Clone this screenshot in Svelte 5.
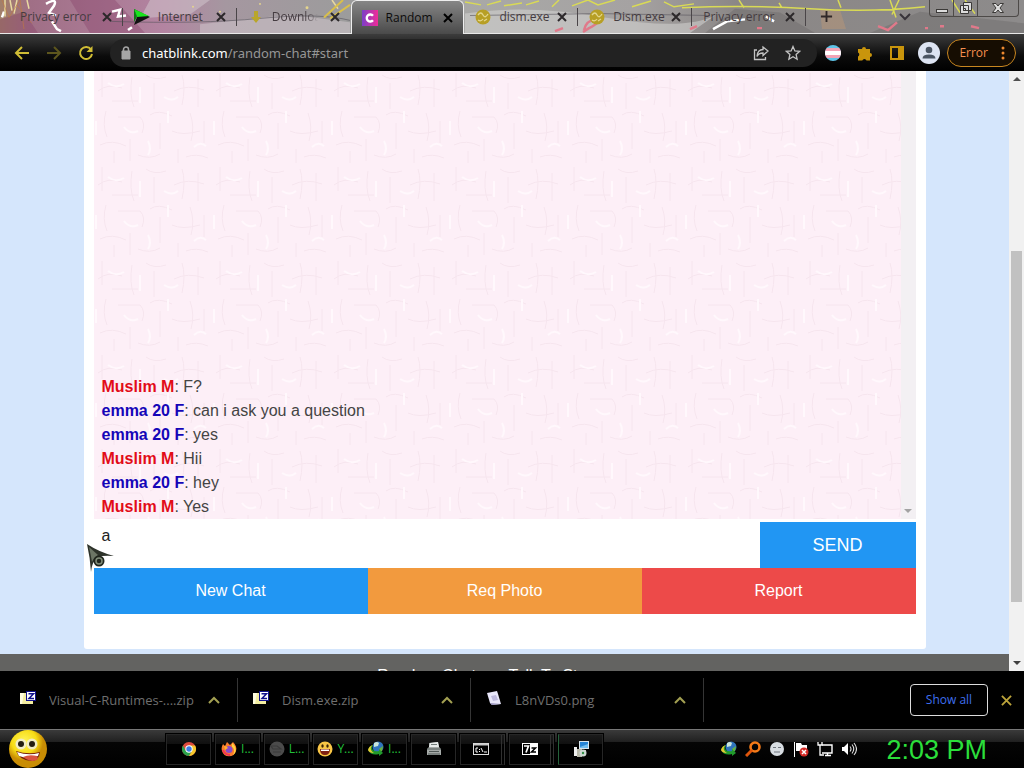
<script>
  const tabs = [
    { title: 'Privacy error', icon: null },
    { title: 'Internet', icon: 'idm' },
    { title: 'Downloads', icon: 'down' },
    { title: 'Random', icon: 'chat', active: true },
    { title: 'dism.exe', icon: 'gold' },
    { title: 'Dism.exe', icon: 'gold' },
    { title: 'Privacy error', icon: null }
  ];
  const messages = [
    { who: 'Muslim M', me: true, text: 'F?' },
    { who: 'emma 20 F', me: false, text: 'can i ask you a question' },
    { who: 'emma 20 F', me: false, text: 'yes' },
    { who: 'Muslim M', me: true, text: 'Hii' },
    { who: 'emma 20 F', me: false, text: 'hey' },
    { who: 'Muslim M', me: true, text: 'Yes' }
  ];
  const downloads = [
    { name: 'Visual-C-Runtimes-....zip', kind: 'zip' },
    { name: 'Dism.exe.zip', kind: 'zip' },
    { name: 'L8nVDs0.png', kind: 'png' }
  ];
  const tasks = [
    { icon: 'chrome', label: '' },
    { icon: 'firefox', label: 'I...' },
    { icon: 'globe', label: 'L...' },
    { icon: 'smile', label: 'Y...' },
    { icon: 'idmball', label: 'I...' },
    { icon: 'printer', label: '' },
    { icon: 'cmd', label: '', stacked: true },
    { icon: 'seven', label: '', stacked: true },
    { icon: 'installer', label: '', lit: true }
  ];
  const tray = ['idmball', 'search', 'face', 'flag', 'network', 'volume'];
  let draft = $state('a');
</script>

{#snippet icon(name)}
  <svg class="icon" viewBox="0 0 16 16" aria-hidden="true">
    {#if name === 'idm'}
      <path d="M0 0 16 8 0 16 3 8Z" fill="#111" /><path d="M0 0 15 7 3 8Z" fill="#19e51d" /><path d="M0 0 3 8 0 13Z" fill="#0c7c12" />
    {:else if name === 'down'}
      <path d="M6 2h4v6h3l-5 6-5-6h3Z" fill="#b9a62a" />
    {:else if name === 'chat'}
      <defs><linearGradient id="chatg" x2="1"><stop stop-color="#7b3fc8" /><stop offset="1" stop-color="#f02b98" /></linearGradient></defs>
      <rect width="16" height="16" fill="url(#chatg)" />
      <path d="M11 5.8A3.500 3.500 0 1 0 11 10.200" fill="none" stroke="#fff" stroke-width="2.400" />
    {:else if name === 'gold'}
      <circle cx="8" cy="8" r="7.5" fill="#b79f25" /><path d="M3 6q3-4 5 0t5-1M3 11q3 2 5-1M9 12l3-2" fill="none" stroke="#e2d68c" stroke-width="1.300" />
    {:else if name === 'zip'}
      <path d="M0 3h6l1 2h6v9H0Z" fill="#f3eda0" /><path d="M0 3h4l-2 11H0Z" fill="#fffde0" />
      <rect x="6.5" y="1.5" width="9" height="9" fill="#fff" stroke="#10108c" /><path d="M8.5 3.8h5L9 8.4h5" fill="none" stroke="#10108c" stroke-width="1.5" />
    {:else if name === 'png'}
      <path d="m1 3 10-2 1 3 3 10-9 1-2-2Z" fill="#e9e7fa" /><path d="m5 6 5-1 2 5-5 1Z" fill="#bdb9dd" /><path d="m4 13 11 1-9 1Z" fill="#9893bd" />
    {:else if name === 'chrome'}
      <circle cx="8" cy="8" r="7" fill="#dd4b3e" /><path d="M1.9 4.5A7 7 0 0 0 8 15l3.2-5.2H4.8Z" fill="#2ba24c" /><path d="M14.1 4.5A7 7 0 0 1 8 15l3.2-5.2L8 4.5Z" fill="#f6c82d" />
      <circle cx="8" cy="8" r="3.7" fill="#fff" /><circle cx="8" cy="8" r="2.7" fill="#3c7de6" />
    {:else if name === 'firefox'}
      <path d="M2 3l2 2 2-4 3 3 3-3c3 3 4 6 3 9a7.3 7.3 0 0 1-14 0C0 7 1 5 2 3Z" fill="#fb7c2c" /><path d="m11 2 2 2c3 4 2 8-1 10 2-4 1-7-1-8Z" fill="#ffd23e" />
      <circle cx="8" cy="8.5" r="3.5" fill="#874bc9" /><path d="M2 9q2 5 7 5" stroke="#f33255" stroke-width="2" fill="none" /><path d="M3 5q3 0 4 2L4 9Z" fill="#ffb02e" />
    {:else if name === 'globe'}
      <circle cx="8" cy="8" r="7.5" fill="#4b4b4b" /><path d="M2 5h6l4 3H4ZM4 11h8" stroke="#3a3a3a" fill="none" stroke-width="1.200" />
    {:else if name === 'smile'}
      <circle cx="8" cy="8" r="7.5" fill="#f9c646" /><path d="M3 8h10q0 6-5 6T3 8Z" fill="#7e2013" /><path d="M4 8.5h8v1.5H4Z" fill="#fff" />
      <ellipse cx="5.5" cy="5" rx="1.2" ry="1.8" fill="#3a2205" /><ellipse cx="10.5" cy="5" rx="1.2" ry="1.8" fill="#3a2205" />
    {:else if name === 'idmball'}
      <circle cx="10" cy="6" r="5.500" fill="#2f74bd" /><path d="M6 2q3-2 5 0l-1 3-4 1Z" fill="#c9e6dc" /><path d="m11 8 4-3-1 5-2 1Z" fill="#69b33e" />
      <path d="M0 9q1-4 5-5-2 3 0 5 2 2 6 1V8l4 4-4 3v-2q-8 2-11-4Z" fill="#219a2c" /><path d="M0 9q1-4 5-5-3 2-2 5 1 2 3 3Q1 12 0 9Z" fill="#e8c832" />
    {:else if name === 'printer'}
      <path d="m3 2 9-1 1 5 2 2v6H1V8l2-2Z" fill="#a5aaa8" /><path d="m4 2 8-1 1 5H3Z" fill="#e8eceb" /><path d="M1 8h14M3 10.500h10M2 13h12" stroke="#515957" /><path d="M5 3.500h6" stroke="#727b79" />
    {:else if name === 'cmd'}
      <rect x=".5" y="2.5" width="15" height="11" fill="#000" stroke="#ddd" /><path d="M1 3.5h14" stroke="#ccc" stroke-width="2" />
      <path d="M5 7H3v4h2M6.5 8v1M6.5 10v1M8 7l2 4M11 11h3" stroke="#fff" fill="none" />
    {:else if name === 'seven'}
      <rect x=".5" y="2.5" width="15" height="11" fill="#000" stroke="#fff" /><path d="M8 3h7.500v10H8Z" fill="#fff" /><path d="M2 5h4.500L4 11.500" stroke="#fff" stroke-width="1.700" fill="none" /><path d="M9.500 7h4l-4 4h4.500" stroke="#000" stroke-width="1.500" fill="none" />
    {:else if name === 'installer'}
      <path d="M6 0h10v8H6Z" fill="#d9e6ee" /><path d="M7 1h8v6H7Z" fill="#2684d5" /><path d="m7 6 8-3v4H7Z" fill="#70bdf0" /><path d="M9 9h4v2H9Z" fill="#bbb" /><path d="M1 6h3v9H1Z" fill="#eee" /><path d="M4 8h5v8H4Z" fill="#b7b7a9" />
      <circle cx="10" cy="12" r="3.500" fill="#cbd6d0" /><circle cx="10" cy="12" r="1.200" fill="#318e45" />
    {:else if name === 'search'}
      <circle cx="10" cy="6" r="4.500" fill="none" stroke="#f47a18" stroke-width="2.600" /><path d="m7 9-6 6" stroke="#e0560c" stroke-width="3" />
    {:else if name === 'face'}
      <circle cx="8" cy="8" r="7" fill="#d8dde2" /><path d="M4 6.500h3M9 6.500h3M5 11h6" stroke="#6f757c" stroke-width="1.200" />
    {:else if name === 'flag'}
      <path d="M1.500 1v15" stroke="#fff" /><path d="M3 2h5l1 2h5v6H3Z" fill="#fff" /><circle cx="11" cy="11" r="4.500" fill="#d42a26" /><path d="m9 9 4 4m0-4-4 4" stroke="#fff" stroke-width="1.500" />
    {:else if name === 'network'}
      <path d="M5 4h10v8H5M8 14.500h6M10.500 12v2" fill="none" stroke="#fff" stroke-width="1.400" /><path d="M1 1v3h4V1M3 4v10h4" fill="none" stroke="#fff" stroke-width="1.300" />
    {:else if name === 'volume'}
      <path d="M1 6h2l4-4v12l-4-4H1Z" fill="#fff" /><path d="M9 5.500q2 2.500 0 5M11 3.500q3.500 4.500 0 9M13 2q5 6 0 12" fill="none" stroke="#ddd" stroke-width="1.100" />
    {/if}
  </svg>
{/snippet}

<div class="screen">
  <header class="tabstrip">
    <svg class="theme" viewBox="0 0 1024 34" preserveAspectRatio="none" aria-hidden="true">
      <defs>
        <linearGradient id="sky" x2="1">
          <stop stop-color="#a2806a" /><stop offset=".03" stop-color="#a06f86" /><stop offset=".16" stop-color="#b384a1" /><stop offset=".22" stop-color="#a597a0" />
          <stop offset=".34" stop-color="#9c9c9c" /><stop offset=".45" stop-color="#a9a9a7" /><stop offset=".62" stop-color="#a5a2a2" /><stop offset=".72" stop-color="#8b8786" /><stop offset="1" stop-color="#8d8b8b" />
        </linearGradient>
      </defs>
      <rect width="1024" height="34" fill="url(#sky)" />
      <path d="M70 0h45l30 34H90ZM0 20l24-8 14 22H0Z" fill="#853d63" opacity=".35" />
      <path d="M150 0h60l-20 15-50 4ZM200 25l90-10 60 8v11H200Z" fill="#d3c9d0" opacity=".5" />
      <path d="M465 14q60-10 140 4t110-2L690 34H465Z" fill="#d9d9d7" opacity=".5" />
      <path d="m705 34 30-25 45 4 35 21ZM870 34l50-22 104 12v10Z" fill="#636062" opacity=".35" />
      <path d="M820 10h20l6 20h-24Z" fill="#c69a72" opacity=".4" />
      <path d="M110 22q90 3 150-3t90 2M470 16l130-2 110 2" stroke="#55515a" fill="none" opacity=".6" />
      <g fill="none" stroke="#fff" stroke-width="2.500">
        <path d="M46 4q12-7 8 2l-5 7 7 3M52 22l5 8 4 2M112 12l8-2-2 7 8-1M128 31l4-3M2 18l2-6M713 30l14-8 18-2M766 17l8 5" />
      </g>
      <g fill="none" stroke="#e8d9a0" stroke-width="1.500"><path d="M5 0v17M10 0l2 11M17 0l-3 14M27 0l2 9M332 0l6 9" /></g>
      <path d="M343 0l-19 18M350 5l-20 14" fill="none" stroke="#d9bf4a" stroke-width="2" />
      <path d="M2 0l7 18 11-18 4 30M17 6l15 18" stroke="#c47b3e" fill="none" opacity=".6" />
      <g fill="none" stroke="#d9da55" stroke-width="1.500">
        <path d="M465 2l16 3M487 5l14-4M504 6l18-3M526 5l13-4M552 7l7-7M572 6l16-6 10 5 17-5M632 7l19-6M664 2l10 5 20-3M682 8q65-3 128 1t115-2M739 0l5 8M779 3l3 5M838 0l3 8M890 0l6 18M899 0l-7 15M952 0l8 13M965 0l10 14" />
      </g>
      <g fill="none" stroke="#e0798a" stroke-width="2.500"><path d="M584 31q2-10 12-11 5 3-7 9l-6 4M555 32l8-3M690 30l7-3M878 27l10 4 9-8M971 27l8 2M925 29h3M940 27h4M757 29h5" /></g>
      <g fill="#e4d58d"><circle cx="220" cy="12" r="1" /><circle cx="307" cy="8" r="1.500" /><circle cx="260" cy="4" r="1" /><circle cx="193" cy="7" r="1" /></g>
    </svg>

    <nav class="tabs" aria-label="Tabs">
      {#each tabs as tab, i}
        <div class={['tab', tab.active && 'active', i === 2 && 'before', tab.title === 'Downloads' && 'fade']}>
          {#if tab.icon}{@render icon(tab.icon)}{/if}
          <span class="title">{tab.title}</span>
          <button class="close" aria-label="Close tab">
            <svg viewBox="0 0 10 10"><path d="m1 1 8 8m0-8-8 8" /></svg>
          </button>
        </div>
      {/each}
    </nav>
    <button class="newtab" aria-label="New tab"><svg viewBox="0 0 14 14"><path d="M7 1v12M1 7h12" /></svg></button>
    <button class="tabsearch" aria-label="Search tabs"><svg viewBox="0 0 12 8"><path d="m1 1 5 5 5-5" /></svg></button>
    <div class="window">
      <button aria-label="Minimize"><svg viewBox="0 0 16 14"><rect x="2.500" y="8.500" width="11" height="3" /></svg></button>
      <button aria-label="Restore"><svg viewBox="0 0 16 14"><path d="M5.500 1.500h8v8h-8ZM2.500 4.500h8v8h-8ZM5.500 7.500h2v2h-2Z" /></svg></button>
      <button aria-label="Close"><svg viewBox="0 0 16 14"><path d="M2.500 2.500h3.500L8 5l2-2.500h3.500L10 7l3.500 4.500H10L8 9l-2 2.500H2.500L6 7Z" /></svg></button>
    </div>
  </header>

  <div class="toolbar">
    <button class="nav" aria-label="Back"><svg viewBox="0 0 16 16"><path d="M15 8H2M8 2 2 8l6 6" /></svg></button>
    <button class="nav dim" aria-label="Forward"><svg viewBox="0 0 16 16"><path d="M1 8h13M8 2l6 6-6 6" /></svg></button>
    <button class="nav" aria-label="Reload"><svg viewBox="0 0 16 16"><path d="M13 4.500A6 6 0 1 0 14 9" /><path d="M14.500 1v6h-6Z" class="fill" /></svg></button>
    <div class="address">
      <svg class="lock" viewBox="0 0 10 14" aria-hidden="true"><path d="M1 5h8v8H1Z" fill="#a6a6a6" stroke="#a6a6a6" /><path d="M2.500 5V3.500a2.500 2.500 0 0 1 5 0V5" fill="none" stroke="#a6a6a6" stroke-width="1.500" /></svg>
      <a class="url" href="#start"><b>chatblink.com</b>/random-chat#start</a>
      <button class="act" aria-label="Share"><svg viewBox="0 0 16 16"><path d="M4 5H1.500v9.500h11V12M10 2l5 4-5 4.500V8Q5.500 8 4 11.500 4.500 4.500 10 4.500Z" /></svg></button>
      <button class="act" aria-label="Bookmark"><svg viewBox="0 0 16 16"><path d="m8 1.500 1.900 4.400 4.800.4-3.600 3.200 1 4.700L8 11.700l-4.100 2.500 1-4.700L1.300 6.300l4.800-.4Z" /></svg></button>
    </div>
    <button class="ext" aria-label="Flag extension"><svg viewBox="0 0 16 16"><defs><clipPath id="disc"><circle cx="8" cy="8" r="8" /></clipPath></defs><g clip-path="url(#disc)"><path fill="#5fc4e8" d="M0 0h16v16H0Z" /><path fill="#f2a3b5" d="M0 3h16v10H0Z" /><path fill="#fff" d="M0 6h16v4H0Z" /></g></svg></button>
    <button class="ext" aria-label="Extensions"><svg viewBox="0 0 16 16"><path fill="#c9950c" d="M1 4h4a2 2 0 1 1 4 0h4v4a2 2 0 1 1 0 4v3.500H9.500a2.200 2.200 0 0 0-4.200 0H1v-4a2.200 2.200 0 0 0 0-4Z" /></svg></button>
    <button class="ext" aria-label="Side panel"><svg viewBox="0 0 16 16"><path d="M2 2h12v12H2Z" fill="none" stroke="#c9950c" stroke-width="2" /><path d="M9 2h5v12H9Z" fill="#c9950c" /></svg></button>
    <button class="avatar" aria-label="Profile"><svg viewBox="0 0 22 22"><circle cx="11" cy="11" r="11" fill="#dde4f2" /><circle cx="11" cy="8" r="3.300" fill="#4b5563" /><path d="M4.500 16.500q0-4 6.500-4t6.500 4Z" fill="#4b5563" /></svg></button>
    <button class="error">Error
      <svg viewBox="0 0 4 14"><circle cx="2" cy="2" r="1.500" /><circle cx="2" cy="7" r="1.500" /><circle cx="2" cy="12" r="1.500" /></svg>
    </button>
  </div>

  <div class="viewport">
    <div class="page">
      <main class="card">
        <div class="chat">
          <div class="log">
            <svg class="paper" aria-hidden="true">
              <defs>
                <pattern id="weave" width="118" height="94" patternUnits="userSpaceOnUse">
                  <path d="M4 20q10-8 24-3M8 2v24M38 6q-3 18 2 30M18 30h26M52 4q8 6 20 2M60 12v26M80 20q14-7 30-1M88 4q4 12 0 30M104 8v28M12 40q-4 14 1 26M24 46h22q6 6 2 16M56 44q8-6 22 1M66 52v26M78 60q10 5 28 0M96 42q5 14 1 28M6 74q12-6 26 1M36 68v22M44 84q12 5 22-1M84 78v14M92 86q10-4 22 1M110 50v22M20 80v12" fill="none" stroke="#f6e5ee" stroke-width="1" />
                  <path d="M14 12q8 6 16 1M46 16v16M70 26q8 5 14 0M30 56q6 8 14 4M74 40v12M100 76q6-6 12-1M54 70q4 8 0 14M2 50v14" fill="none" stroke="#fff8fc" stroke-width="2" />
                </pattern>
              </defs>
              <rect width="100%" height="100%" fill="url(#weave)" />
            </svg>
            {#each messages as m}
              <p><b class={{ me: m.me }}>{m.who}</b>: {m.text}</p>
            {/each}
          </div>
          <div class="logbar"><svg viewBox="0 0 8 4"><path d="M0 0h8L4 4Z" fill="#a3a3a3" /></svg></div>
        </div>
        <form class="compose" onsubmit={(e) => e.preventDefault()}>
          <textarea aria-label="Message" bind:value={draft}></textarea>
          <button class="send">SEND</button>
        </form>
        <div class="actions">
          <button class="new">New Chat</button>
          <button class="photo">Req Photo</button>
          <button class="report">Report</button>
        </div>
      </main>
      <footer>Random Chats — Talk To Strangers</footer>
    </div>
    <div class="scroll">
      <svg viewBox="0 0 8 4"><path d="M0 4h8L4 0Z" fill="#505050" /></svg>
      <div class="track"><div class="thumb"></div></div>
      <svg viewBox="0 0 8 4"><path d="M0 0h8L4 4Z" fill="#404040" /></svg>
    </div>
  </div>

  <section class="shelf" aria-label="Downloads">
    {#each downloads as d}
      <div class="item">
        {@render icon(d.kind)}
        <span>{d.name}</span>
        <button aria-label="More options"><svg viewBox="0 0 12 8"><path d="m1 7 5-5 5 5" /></svg></button>
      </div>
    {/each}
    <button class="all">Show all</button>
    <button class="shut" aria-label="Close downloads"><svg viewBox="0 0 12 12"><path d="m1 1 10 10m0-10L1 11" /></svg></button>
  </section>

  <div class="taskbar">
    <button class="start" aria-label="Start">
      <svg viewBox="0 0 38 38">
        <defs><radialGradient id="sun" cx=".4" cy=".3"><stop stop-color="#fff55a" /><stop offset=".65" stop-color="#f7dc16" /><stop offset="1" stop-color="#c98d04" /></radialGradient></defs>
        <circle cx="19" cy="19" r="19" fill="url(#sun)" />
        <circle cx="12" cy="14" r="5.500" fill="#f1ecc4" /><circle cx="23" cy="14" r="5.500" fill="#f1ecc4" />
        <circle cx="12" cy="14" r="3" fill="#231d12" /><circle cx="23" cy="14" r="3" fill="#231d12" />
        <path d="M7 21q12 4 24 1-1 9-9 9Q10 30 7 21Z" fill="#75200b" /><path d="M8 22q11 4 22 1l-1 3q-10 3-19 0Z" fill="#fff" /><path d="M14 27q6-3 14-1l1 3q-5 4-12 0Z" fill="#d9543f" />
      </svg>
    </button>
    <div class="tasks">
      {#each tasks as t}
        <button class={['task', t.stacked && 'stacked', t.lit && 'lit']} aria-label={t.icon}>
          {@render icon(t.icon)}
          {#if t.label}<span>{t.label}</span>{/if}
        </button>
      {/each}
    </div>
    <div class="tray">
      {#each tray as t}{@render icon(t)}{/each}
    </div>
    <time>2:03 PM</time>
  </div>

  <svg class="pointer" viewBox="0 0 28 30" aria-hidden="true">
    <path d="M1 1q12 8 27 12-10-1-16 1-6 4-7 15Q4 14 1 1Z" fill="#2d322a" /><path d="M3 4q2 9 3 15 2-5 6-7Z" fill="#6c7565" />
    <circle cx="13" cy="18" r="5.500" fill="#20251d" /><circle cx="13" cy="18" r="3" fill="none" stroke="#828d79" stroke-width="1.500" />
  </svg>
</div>

<style>
  :global(body) { margin: 0; background: #000; }
  .screen { position: relative; display: flex; flex-direction: column; height: 100vh; overflow: hidden; font: 12px/16px "Open Sans", "Noto Sans", sans-serif; }
  button { margin: 0; padding: 0; border: 0; background: none; font: inherit; color: inherit; display: flex; align-items: center; justify-content: center; }
  svg { display: block; flex: none; }
  .icon { width: 16px; height: 16px; }

  .tabstrip { position: relative; display: flex; flex: none; height: 34px; padding-left: 9px; border-bottom: 1px solid #e9e9e9; box-sizing: border-box; }
  .theme { position: absolute; inset: 0; width: 100%; height: 100%; }
  .tabs { position: relative; display: flex; flex: 0 1 797px; min-width: 0; }
  .tab { flex: 1 1 0; min-width: 0; display: flex; align-items: center; gap: 8px; padding: 0 8px 0 11px; color: #453c41; position: relative; }
  .tab:not(.active)::after { content: ""; position: absolute; right: 0; top: 8px; height: 18px; width: 1px; background: #4a4548; }
  .tab.before::after { display: none; }
  .title { flex: 1; min-width: 0; overflow: hidden; white-space: nowrap; margin-right: -8px; }
  .fade .title { margin-right: 0; mask-image: linear-gradient(90deg, #000 70%, transparent 98%); }
  .close { width: 16px; height: 16px; flex: none; }
  .close svg { width: 10px; height: 10px; stroke: #2c282a; stroke-width: 2; }
  .active { background: linear-gradient(#868686, #4a4a4a); border: 1px solid #eee; border-bottom: 0; border-radius: 6px 6px 0 0; margin-bottom: -1px; padding: 0 7px 0 10px; color: #0c0c0c; }
  .active .close svg { stroke: #000; }
  .newtab, .tabsearch { position: relative; width: 36px; }
  .newtab { margin-left: 2px; }
  .newtab svg { width: 13px; height: 13px; stroke: #302828; stroke-width: 2; }
  .tabsearch { margin-left: auto; width: 24px; margin-right: 12px; }
  .tabsearch svg { width: 12px; height: 8px; fill: none; stroke: #38343a; stroke-width: 2; }
  .window { position: relative; display: flex; height: 17px; border: 1px solid #4d4a48; border-top: 0; border-radius: 0 0 4px 4px; margin-right: 5px; box-sizing: border-box; }
  .window button { width: 24px; border-right: 1px solid #4d4a48; }
  .window button:last-child { width: 40px; border-right: 0; }
  .window svg { width: 16px; height: 14px; fill: #ddd; stroke: #3c3a38; stroke-width: 1; }

  .toolbar { display: flex; align-items: center; flex: none; height: 37px; padding: 0 8px 0 6px; background: linear-gradient(#3c3c3c, #0b0b0b 60%, #000); box-sizing: border-box; }
  .nav { width: 32px; height: 32px; }
  .nav svg { width: 16px; height: 16px; fill: none; stroke: #d0bd35; stroke-width: 2; }
  .nav .fill { fill: #d0bd35; stroke: none; }
  .nav.dim svg { stroke: #5d561d; }
  .address { flex: 1; min-width: 0; display: flex; align-items: center; height: 28px; margin-left: 8px; padding: 0 8px 0 11px; border-radius: 14px; background: #222; }
  .lock { width: 10px; height: 14px; margin-right: 11px; }
  .url { flex: 1; color: #969696; font: 13px/20px "Noto Sans", "Open Sans", sans-serif; text-decoration: none; white-space: nowrap; overflow: hidden; }
  .url b { color: #fff; font-weight: 400; }
  .act { width: 32px; height: 28px; }
  .act svg { width: 16px; height: 16px; fill: none; stroke: #c4c4c4; stroke-width: 1.3; }
  .ext { width: 32px; height: 28px; }
  .ext svg { width: 16px; height: 16px; }
  .avatar { width: 32px; }
  .avatar svg { width: 22px; height: 22px; }
  .error { height: 28px; padding: 0 10px 0 11px; gap: 13px; border: 1px solid #c8861f; border-radius: 14px; background: #160d02; color: #f58f4e; margin-left: 2px; box-sizing: border-box; }
  .error svg { width: 4px; height: 14px; fill: #ef8b30; }

  .viewport { flex: 1; min-height: 0; display: flex; }
  .page { flex: 1; min-width: 0; display: flex; flex-direction: column; background: #d5e6fc; overflow: hidden; }
  .card { flex: 1; min-height: 0; display: flex; flex-direction: column; width: 84%; max-width: 842px; margin: 0 auto 5px; padding: 0 10px 35px; box-sizing: border-box; background: #fff; border-radius: 0 0 3px 3px; font: 16px/24px "Liberation Sans", Arial, sans-serif; }
  .chat { flex: 1; min-height: 0; display: flex; margin-bottom: 3px; }
  .log { position: relative; flex: 1; display: flex; flex-direction: column; justify-content: flex-end; padding: 0 8px; color: #444; background: #fdeff7; }
  .paper { position: absolute; inset: 0; width: 100%; height: 100%; }
  .log p { position: relative; margin: 0; }
  .log b { color: #1505b8; }
  .log b.me { color: #e20c18; }
  .logbar { width: 15px; background: #f3f0f3; display: flex; align-items: flex-end; justify-content: center; padding-bottom: 6px; box-sizing: border-box; }
  .logbar svg, .scroll svg { width: 8px; height: 4px; }
  .compose { display: flex; height: 46px; margin: 0; }
  textarea { flex: 1; min-width: 0; margin: 0; padding: 2px 8px; border: 0; resize: none; background: #fff; color: #222; font: inherit; outline: 0; box-sizing: border-box; }
  .send { width: 156px; background: #2196f3; color: #fff; font-size: 18px; }
  .actions { display: flex; height: 46px; }
  .actions button { flex: 1; color: #fff; }
  .new { background: #2196f3; }
  .photo { background: #f29a3e; }
  .report { background: #ed4a49; }
  footer { flex: none; height: 17px; padding-top: 10px; box-sizing: border-box; overflow: hidden; background: #636361; color: #fff; text-align: center; font: 16px/24px "Liberation Sans", Arial, sans-serif; }
  .scroll { width: 15px; display: flex; flex-direction: column; align-items: center; background: #f1f1f1; padding: 6px 0; box-sizing: border-box; }
  .track { flex: 1; align-self: stretch; display: flex; flex-direction: column; padding: 7px 2px; }
  .thumb { height: 62%; margin-top: auto; margin-bottom: 52px; background: #c1c1c1; }

  .shelf { flex: none; height: 58px; display: flex; align-items: center; background: #000; padding: 0 10px 0 5px; color: #6f6f6f; font-size: 13px; line-height: 18px; }
  .item { flex: 0 1 233px; min-width: 0; box-sizing: border-box; height: 44px; display: flex; align-items: center; gap: 13px; padding: 0 17px 0 15px; border-right: 1px solid #353535; }
  .item span { flex: 1; white-space: nowrap; overflow: hidden; }
  .item .icon { margin-bottom: 4px; }
  .item button svg { width: 12px; height: 8px; fill: none; stroke: #a3a052; stroke-width: 2; }
  .all { margin-left: auto; width: 78px; height: 32px; border: 1px solid #ddd; border-radius: 4px; color: #3f6fee; font-size: 12px; box-sizing: border-box; }
  .shut { width: 16px; height: 16px; margin-left: 10px; }
  .shut svg { width: 11px; height: 11px; stroke: #bca43a; stroke-width: 2; }

  .taskbar { flex: none; height: 39px; display: flex; align-items: center; box-sizing: border-box; border-top: 1px solid #777; padding: 0 37px 0 9px; background: linear-gradient(#3a3a3a, #202020 12px, #050505 12px, #000); color: #22c23a; }
  .start svg { width: 38px; height: 38px; }
  .tasks { display: flex; gap: 4px; margin-left: 119px; align-self: stretch; align-items: center; }
  .task { width: 45px; height: 31px; gap: 4px; box-sizing: border-box; border: 1px solid #262626; background: linear-gradient(#1b1b1b, #101010 9px, #000 9px); box-shadow: 0 0 0 1px #000; }
  .stacked { border-right: 4px double #303030; }
  .lit { border-left-color: #24613a; }
  .tray { margin-left: auto; margin-right: 29px; display: flex; gap: 8px; }
  time { font: 27px/36px "Liberation Sans", Arial, sans-serif; color: #2bdf3b; white-space: nowrap; padding-top: 2px; }
  .pointer { position: absolute; left: 86px; top: 543px; width: 28px; height: 30px; }
</style>
